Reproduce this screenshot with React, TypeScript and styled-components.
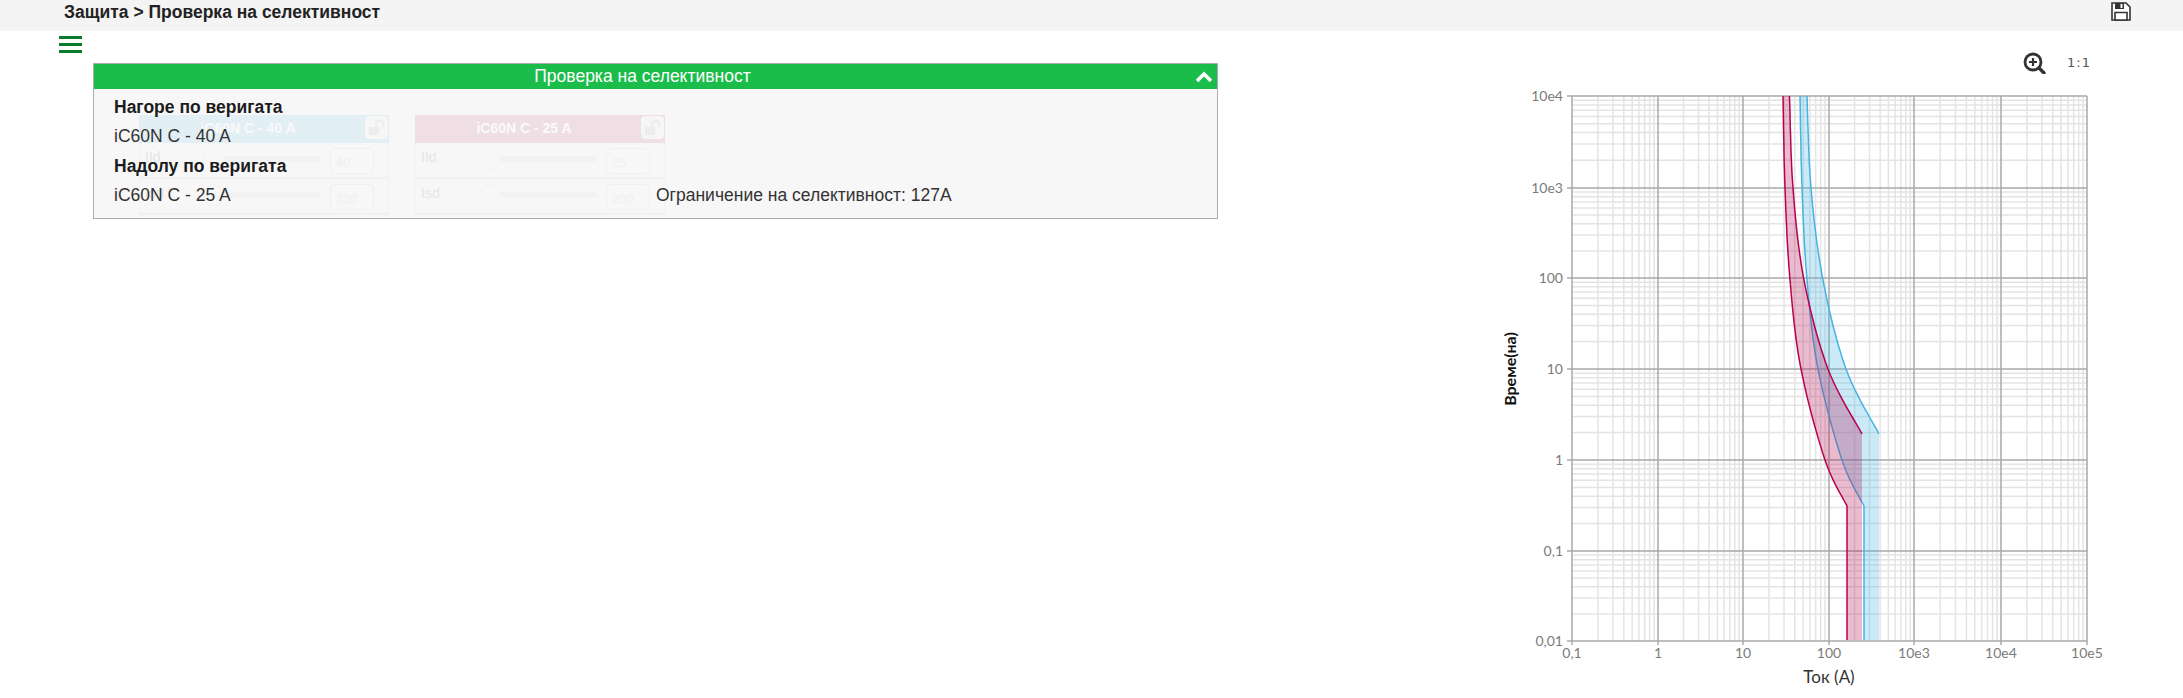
import React from 'react';
import styled, { createGlobalStyle } from 'styled-components';

const GlobalStyle = createGlobalStyle`
  html, body {
    margin: 0;
    padding: 0;
    background: #fff;
    font-family: "Liberation Sans", Arial, sans-serif;
    color: #222;
  }
`;

const Page = styled.div`
  width: 2183px;
  height: 698px;
  overflow: hidden;
`;

const TopBar = styled.header`
  height: 31px;
  background: #f4f4f4;
  display: flex;
  align-items: flex-start;
  justify-content: space-between;
  padding: 2px 52px 0 64px;
  box-sizing: border-box;
`;

const Crumb = styled.div`
  font-size: 17.5px;
  font-weight: bold;
  line-height: 20px;
  color: #222;
`;

const Main = styled.div`
  display: flex;
  justify-content: space-between;
`;

const LeftColumn = styled.div`
  padding: 5px 0 0 59px;
`;

const Burger = styled.div`
  width: 23px;
  display: flex;
  flex-direction: column;
  gap: 4px;

  span {
    height: 3px;
    background: #0b7a2a;
  }
`;

const Panel = styled.section`
  width: 1125px;
  margin: 10px 0 0 34px;
  border: 1px solid #acacac;
  box-sizing: border-box;
  background: #f7f7f7;
`;

const PanelHead = styled.div`
  height: 25px;
  background: #1bbd4a;
  color: #fff;
  display: flex;
  align-items: center;
  font-size: 17.5px;
`;

const PanelTitle = styled.div`
  flex: 1;
  text-align: center;
`;

const Chevron = styled.div`
  width: 26px;
  display: flex;
  padding-left: 4px;
  box-sizing: border-box;
`;

const PanelBody = styled.div`
  position: relative;
  height: 129px;
  overflow: hidden;
  padding: 4px 0 0 20px;
  box-sizing: border-box;
`;

const GhostLayer = styled.div`
  position: absolute;
  top: 26px;
  left: 45px;
  display: flex;
  gap: 26px;
`;

const GhostCard = styled.div`
  width: 250px;
  border: solid #f3f3f3;
  border-width: 0 1px;
  box-sizing: border-box;
`;

const GhostHead = styled.div<{ $tint: string }>`
  height: 28px;
  background: ${(p) => p.$tint};
  margin: 0 -1px;
  padding-right: 32px;
  position: relative;
  text-align: center;
  color: #fafafa;
  font-size: 14px;
  font-weight: bold;
  line-height: 27px;
`;

const GhostLock = styled.div`
  position: absolute;
  top: 1px;
  right: 1px;
  width: 23px;
  height: 23px;
  border-radius: 4px;
  background: #f6f6f6;
  display: flex;
  align-items: center;
  justify-content: center;
`;

const GhostRow = styled.div`
  height: 36px;
  border-bottom: 2px solid #f1f1f1;
  box-sizing: border-box;
  display: grid;
  grid-template-columns: 63px 118px 53px;
`;

const GhostLabel = styled.div`
  padding: 6px 0 0 5px;
  font-size: 14px;
  color: #e6e6e6;
`;

const GhostSlider = styled.div`
  position: relative;
  height: 6px;
  margin-top: 13px;
  border-radius: 3px;
  background: #f2f2f2;

  &::before {
    content: '';
    position: absolute;
    left: 0;
    top: -8px;
    width: 20px;
    height: 20px;
    border-radius: 50%;
    border: 1px solid #f3f3f3;
    background: #f7f7f7;
  }
`;

const GhostInput = styled.div`
  width: 44px;
  height: 26px;
  margin: 5px 0 0 9px;
  border: 1px solid #f0f0f0;
  border-radius: 4px;
  box-sizing: border-box;
  padding: 6px 0 0 5px;
  font-size: 13px;
  color: #efefef;
`;

const InfoLine = styled.div<{ $strong?: boolean }>`
  position: relative;
  display: grid;
  grid-template-columns: 542px auto;
  height: 29.3px;
  line-height: 29.3px;
  font-size: 17.5px;
  font-weight: ${(p) => (p.$strong ? 'bold' : 'normal')};
  color: ${(p) => (p.$strong ? '#1c1c1c' : '#333')};
`;

const RightColumn = styled.div`
  width: 693px;
`;

const ChartTools = styled.div`
  display: flex;
  justify-content: flex-end;
  align-items: center;
  height: 21px;
  margin-top: 21px;
  padding-right: 92px;
  gap: 20px;
`;

const OneToOne = styled.span`
  font-family: "DejaVu Sans", sans-serif;
  font-size: 13px;
  letter-spacing: 1px;
  color: #555;
`;

const ChartSvg = styled.svg`
  display: block;
  margin-top: 7px;
`;

const Tick = styled.text<{ $anchor: string }>`
  font-family: Lato, "Open Sans", sans-serif;
  font-size: 14px;
  fill: #7b7b7b;
  text-anchor: ${(p) => p.$anchor};
`;

const AxisTitle = styled.text<{ $bold?: boolean }>`
  font-family: Lato, "Open Sans", sans-serif;
  font-size: ${(p) => (p.$bold ? 16 : 17)}px;
  font-weight: ${(p) => (p.$bold ? 'bold' : 'normal')};
  fill: ${(p) => (p.$bold ? '#111' : '#333')};
  text-anchor: middle;
`;

const X_POS = [1572, 1658, 1743, 1829, 1914, 2001, 2087];
const Y_POS = [96, 188, 278, 369, 460, 551, 641];
const LEFT = X_POS[0];
const RIGHT = X_POS[6];
const TOP = Y_POS[0];
const BOTTOM = Y_POS[6];

const X_LABELS = ['0,1', '1', '10', '100', '10e3', '10e4', '10e5'];
const Y_LABELS = ['10e4', '10e3', '100', '10', '1', '0,1', '0,01'];

type Pt = [number, number];

const RED_LEFT: Pt[] = [[1783, 96], [1785, 188], [1790, 280], [1801, 369], [1825, 460], [1847, 506]];
const RED_RIGHT: Pt[] = [[1789.5, 96], [1793, 188], [1804, 280], [1828, 369], [1862, 434]];
const BLUE_LEFT: Pt[] = [[1800, 96], [1802, 188], [1807, 280], [1818, 369], [1842, 460], [1864, 506]];
const BLUE_RIGHT: Pt[] = [[1807, 96], [1811, 188], [1823, 280], [1846, 369], [1879, 434]];

// catmull-rom sampling so the hand read points give a smooth curve
const smooth = (pts: Pt[]): Pt[] => {
  const out: Pt[] = [];
  for (let i = 0; i < pts.length - 1; i++) {
    const p0 = pts[Math.max(i - 1, 0)];
    const p1 = pts[i];
    const p2 = pts[i + 1];
    const p3 = pts[Math.min(i + 2, pts.length - 1)];
    for (let s = 0; s < 12; s++) {
      const t = s / 12;
      const f = (a: number, b: number, c: number, d: number) =>
        0.5 * (2 * b + (c - a) * t + (2 * a - 5 * b + 4 * c - d) * t * t + (3 * b - a - 3 * c + d) * t * t * t);
      out.push([f(p0[0], p1[0], p2[0], p3[0]), f(p0[1], p1[1], p2[1], p3[1])]);
    }
  }
  out.push(pts[pts.length - 1]);
  return out;
};

const toPoints = (pts: Pt[]) => pts.map((p) => `${p[0].toFixed(1)},${p[1].toFixed(1)}`).join(' ');

const Band = ({ left, right, fill, stroke }: { left: Pt[]; right: Pt[]; fill: string; stroke: string }) => {
  const l = smooth(left);
  const r = smooth(right);
  const lx = left[left.length - 1][0];
  const rx = right[right.length - 1][0];
  const area: Pt[] = [...l, [lx, 640], [rx, 640], ...r.slice().reverse()];
  return (
    <>
      <polygon points={toPoints(area)} fill={fill} />
      <polyline points={toPoints([...l, [lx, 640]])} fill="none" stroke={stroke} strokeWidth={1.5} />
      <polyline points={toPoints(r)} fill="none" stroke={stroke} strokeWidth={1.5} />
    </>
  );
};

const Chart = () => {
  const minors = [2, 3, 4, 5, 6, 7, 8, 9].map((n) => Math.log10(n));
  const decades = [0, 1, 2, 3, 4, 5];
  return (
    <ChartSvg width={693} height={618} viewBox="1490 80 693 618">
      {decades.map((d) =>
        minors.map((m) => {
          const x = X_POS[d] + m * (X_POS[d + 1] - X_POS[d]);
          const y = Y_POS[d + 1] - m * (Y_POS[d + 1] - Y_POS[d]);
          return (
            <g key={`${d}-${m}`} stroke="#e4e4e4" strokeWidth={1.5}>
              <line x1={x} x2={x} y1={TOP} y2={BOTTOM} />
              <line x1={LEFT} x2={RIGHT} y1={y} y2={y} />
            </g>
          );
        })
      )}
      {X_LABELS.map((label, i) => (
        <g key={label}>
          <line x1={X_POS[i]} x2={X_POS[i]} y1={TOP} y2={BOTTOM + 4} stroke="#a9a9a9" strokeWidth={1.5} />
          <Tick $anchor="middle" x={X_POS[i]} y={658}>{label}</Tick>
        </g>
      ))}
      {Y_LABELS.map((label, i) => (
        <g key={label}>
          <line x1={LEFT - 5} x2={RIGHT} y1={Y_POS[i]} y2={Y_POS[i]} stroke="#a9a9a9" strokeWidth={1.5} />
          <Tick $anchor="end" x={1563} y={Y_POS[i] + 5}>{label}</Tick>
        </g>
      ))}
      <Band left={BLUE_LEFT} right={BLUE_RIGHT} fill="rgba(70,180,230,0.28)" stroke="#45b4e4" />
      <Band left={RED_LEFT} right={RED_RIGHT} fill="rgba(180,10,80,0.28)" stroke="#b8004f" />
      <AxisTitle $bold x={0} y={0} transform="translate(1516 369) rotate(-90)">Време(на)</AxisTitle>
      <AxisTitle x={1829} y={683}>Ток (А)</AxisTitle>
    </ChartSvg>
  );
};

const SaveIcon = () => (
  <svg width="20" height="19" viewBox="0 0 20 19">
    <path d="M1 1h14l4 4v13H1z" fill="#fff" stroke="#333" strokeWidth="1.6" />
    <path d="M4 1h9v6H4z" fill="#333" />
    <path d="M9.5 2h2v4h-2z" fill="#fff" />
    <path d="M4 10.5h12V18H4z" fill="#fff" stroke="#333" strokeWidth="1.6" />
  </svg>
);

const ZoomIcon = () => (
  <svg width="24" height="22" viewBox="0 0 24 22">
    <circle cx="10" cy="10" r="8" fill="none" stroke="#333" strokeWidth="2.8" />
    <path d="M6 10h8M10 6v8" stroke="#333" strokeWidth="2.2" />
    <path d="M16 16l5 5" stroke="#333" strokeWidth="3.4" strokeLinecap="round" />
  </svg>
);

const FadedLock = () => (
  <svg width="18" height="18" viewBox="0 0 18 18">
    <rect x="1" y="8" width="10" height="8" fill="#ececec" />
    <path d="M8 8V5a3.5 3.5 0 0 1 7 0v3" fill="none" stroke="#ececec" strokeWidth="1.8" />
  </svg>
);

const ghostCards = [
  { title: 'iC60N C - 40 A', tint: '#e2eff5', ir: '40', isd: '320' },
  { title: 'iC60N C - 25 A', tint: '#efdfe4', ir: '25', isd: '200' },
];

const App = () => {
  return (
    <Page>
      <GlobalStyle />
      <TopBar>
        <Crumb>Защита &gt; Проверка на селективност</Crumb>
        <SaveIcon />
      </TopBar>
      <Main>
        <LeftColumn>
          <Burger>
            <span />
            <span />
            <span />
          </Burger>
          <Panel>
            <PanelHead>
              <PanelTitle>Проверка на селективност</PanelTitle>
              <Chevron>
                <svg width="18" height="12" viewBox="0 0 18 12">
                  <path d="M2 10l7-7 7 7" fill="none" stroke="#fff" strokeWidth="3.6" />
                </svg>
              </Chevron>
            </PanelHead>
            <PanelBody>
              <GhostLayer>
                {ghostCards.map((card) => (
                  <GhostCard key={card.title}>
                    <GhostHead $tint={card.tint}>
                      {card.title}
                      <GhostLock>
                        <FadedLock />
                      </GhostLock>
                    </GhostHead>
                    <GhostRow>
                      <GhostLabel>IId</GhostLabel>
                      <GhostSlider />
                      <GhostInput>{card.ir}</GhostInput>
                    </GhostRow>
                    <GhostRow>
                      <GhostLabel>Isd</GhostLabel>
                      <GhostSlider />
                      <GhostInput>{card.isd}</GhostInput>
                    </GhostRow>
                  </GhostCard>
                ))}
              </GhostLayer>
              <InfoLine $strong>Нагоре по веригата</InfoLine>
              <InfoLine>iC60N C - 40 A</InfoLine>
              <InfoLine $strong>Надолу по веригата</InfoLine>
              <InfoLine>
                <span>iC60N C - 25 A</span>
                <span>Ограничение на селективност: 127A</span>
              </InfoLine>
            </PanelBody>
          </Panel>
        </LeftColumn>
        <RightColumn>
          <ChartTools>
            <ZoomIcon />
            <OneToOne>1:1</OneToOne>
          </ChartTools>
          <Chart />
        </RightColumn>
      </Main>
    </Page>
  );
};

export default App;
